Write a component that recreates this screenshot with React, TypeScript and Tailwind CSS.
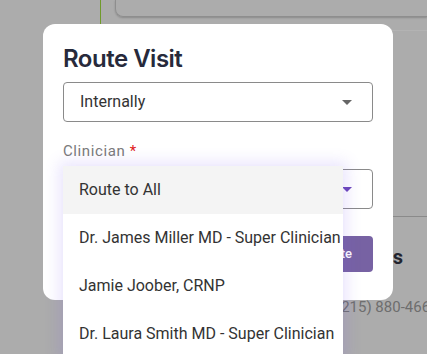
const CLINICIANS = [
    "Route to All",
    "Dr. James Miller MD - Super Clinician",
    "Jamie Joober, CRNP",
    "Dr. Laura Smith MD - Super Clinician",
] as const;

function Caret ({ purple }: { purple?: boolean }) {
    return (
        <svg width="10" height="5" viewBox="0 0 10 5" className={purple ? "fill-[#6a45b8]" : "fill-[#666666]"}>
            <path d="M0 0 L10 0 L5 5 Z" />
        </svg>
    );
}

function BackgroundPage () {
    return (
        <div className="flex h-full">
            <div className="w-[100px] shrink-0" />
            <div className="w-px h-[40px] shrink-0 bg-[#6f9a2a]" />
            <div className="flex-1 min-w-0 overflow-hidden pl-[14px] flex flex-col">
                <div className="h-[17px] rounded-bl-lg border-b border-l border-[#8e8e8e] shadow-[0_1px_2px_rgba(0,0,0,0.2)]" />
                <div className="mt-[13px] h-[187px] border-t border-b border-t-[#b3b3b3] border-b-[#8a8a8a]" />
                <div className="pt-[28px] pr-[24px] text-right text-[20px] font-bold text-[#22242f] leading-6">Contacts</div>
                <div className="pt-[28px] pl-[221px] text-[15px] text-[#6e6e6e] whitespace-nowrap leading-5">(215) 880-4667</div>
            </div>
        </div>
    );
}

export default function App () {
    return (
        <div className="relative w-[427px] h-[354px] overflow-hidden bg-[#acacac] font-['Roboto',sans-serif]">
            <BackgroundPage />

            {/* dialog */}
            <div className="absolute left-[43px] top-[24px] w-[350px] h-[276px] bg-white rounded-xl px-5 pt-[19px]">
                <h2 className="font-['Inter',sans-serif] font-semibold text-[24px] tracking-[-0.5px] leading-8 text-[#272a3b]">Route Visit</h2>
                <div className="mt-[7px] h-10 rounded border border-[#8a8a8a] flex items-center justify-between pl-4 pr-5">
                    <span className="text-[16px] text-[#333333]">Internally</span>
                    <Caret />
                </div>
                <div className="mt-[19px] text-[15px] tracking-[0.6px] text-[#7a7a7a] leading-5">
                    Clinician <span className="text-[#e0201a]">*</span>
                </div>
                <div className="mt-[8px] h-10 rounded border border-[#8a8a8a] flex items-center justify-end pr-5">
                    <Caret purple />
                </div>
                <div className="mt-[27px] flex justify-end">
                    <div className="h-9 w-[80px] rounded bg-[#7762a3] text-white text-[13px] font-medium flex items-center justify-end pr-[21px]">
                        Route
                    </div>
                </div>
            </div>

            {/* clinician menu */}
            <ul className="absolute left-[63px] top-[166px] w-[280px] bg-white shadow-[0_0_14px_4px_rgba(120,90,240,0.16)] text-[16px] text-[#333333]">
                {CLINICIANS.map((name, i) => (
                    <li
                        key={name}
                        className={i === 0 ? "h-12 flex items-center px-4 whitespace-nowrap overflow-hidden bg-[#f4f4f4]" : "h-12 flex items-center px-4 whitespace-nowrap overflow-hidden"}
                    >
                        {name}
                    </li>
                ))}
            </ul>
        </div>
    );
}
